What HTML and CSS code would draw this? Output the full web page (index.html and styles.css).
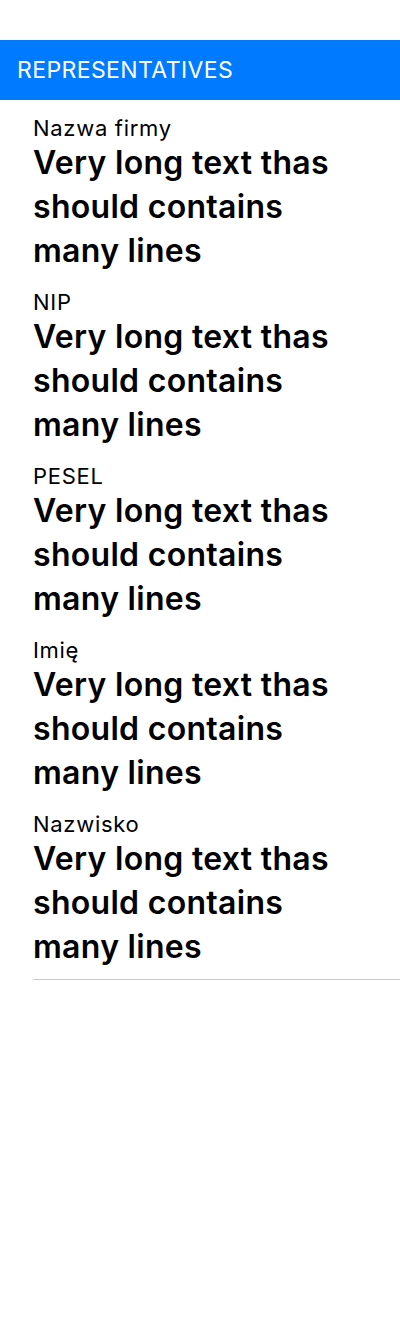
FILE: index.html
```html
<!DOCTYPE html>
<html lang="pl">
<head>
<meta charset="utf-8">
<title>Representatives</title>
<link rel="stylesheet" href="styles.css">
</head>
<body>
<div class="screen">
  <div class="section-header">REPRESENTATIVES</div>
  <div class="fields">
    <div class="field">
      <div class="field-label">Nazwa firmy</div>
      <div class="field-value">Very long text thas should contains many lines</div>
    </div>
    <div class="field">
      <div class="field-label">NIP</div>
      <div class="field-value">Very long text thas should contains many lines</div>
    </div>
    <div class="field">
      <div class="field-label">PESEL</div>
      <div class="field-value">Very long text thas should contains many lines</div>
    </div>
    <div class="field">
      <div class="field-label">Imię</div>
      <div class="field-value">Very long text thas should contains many lines</div>
    </div>
    <div class="field">
      <div class="field-label">Nazwisko</div>
      <div class="field-value">Very long text thas should contains many lines</div>
    </div>
  </div>
  <div class="divider"></div>
</div>
</body>
</html>
```
FILE: styles.css
```css
* { box-sizing: border-box; }
html, body {
  margin: 0;
  padding: 0;
  background: #ffffff;
}
body {
  font-family: Inter, "Noto Sans", "Liberation Sans", sans-serif;
  color: #000000;
}
.screen {
  width: 400px;
  padding-top: 40px;
}
.section-header {
  height: 60px;
  line-height: 60px;
  background: #007aff;
  color: #ffffff;
  font-size: 23px;
  font-weight: 400;
  letter-spacing: 0.4px;
  padding-left: 17px;
}
.fields {
  display: flex;
  flex-direction: column;
  gap: 18px;
  padding: 17px 0 0 33px;
}
.field-label {
  font-size: 22px;
  line-height: 22px;
  font-weight: 400;
  letter-spacing: 0.7px;
}
.field-value {
  margin-top: 2px;
  font-size: 32px;
  line-height: 44px;
  font-weight: 600;
  letter-spacing: 0.3px;
  max-width: 330px;
}
.divider {
  margin: 10px 0 0 33px;
  height: 1px;
  background: #c8c7cc;
}
```
